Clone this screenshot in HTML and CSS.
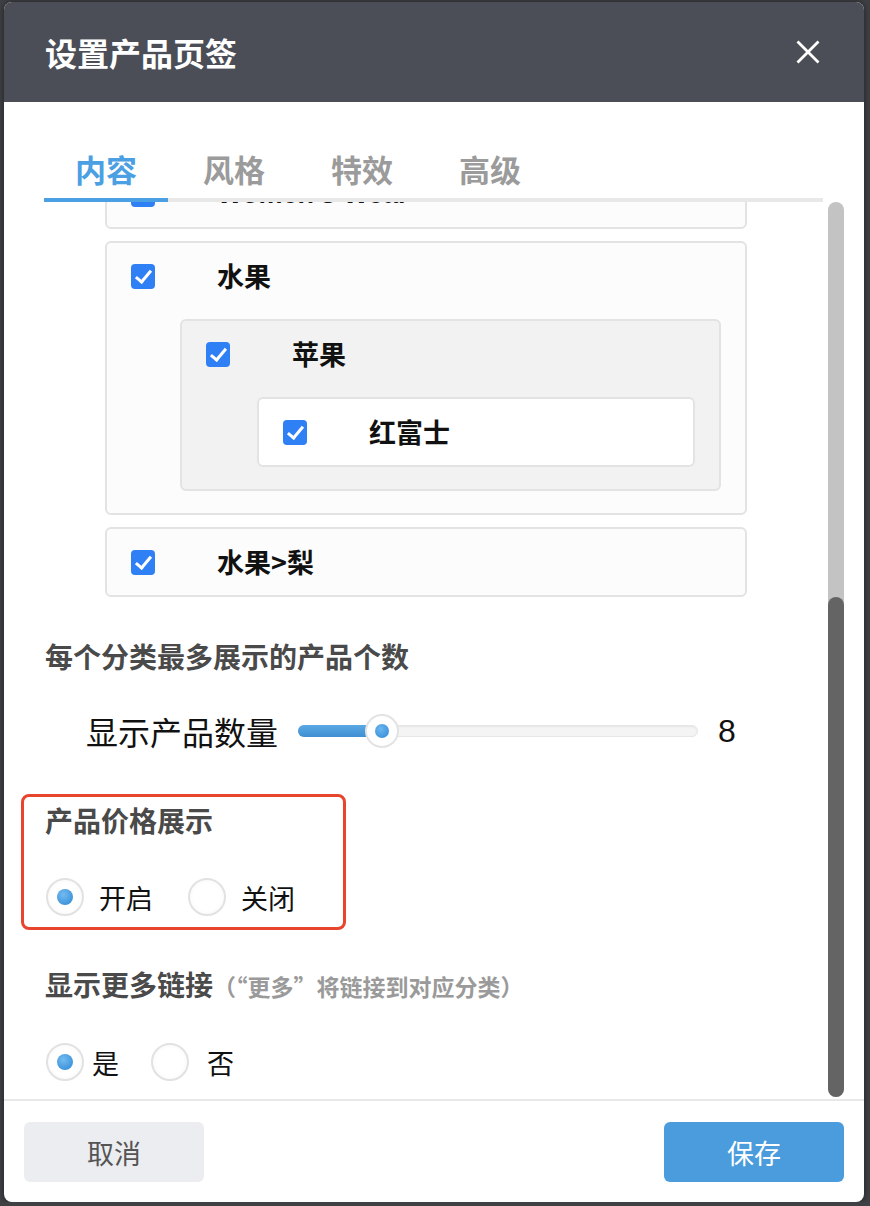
FILE: index.html
```html
<!DOCTYPE html>
<html lang="zh-CN">
<head>
    <meta charset="UTF-8">
    <meta name="viewport" content="width=device-width, initial-scale=1.0">
    <title>设置产品页签</title>
    <link rel="stylesheet" href="styles.css">
</head>
<body>
    <div class="modal">
        <div class="modal-header">
            <div class="modal-title">设置产品页签</div>
            <button class="close-btn">
                <svg width="24" height="24" viewBox="0 0 24 24"><path d="M1.5 1.5 L22.5 22.5 M22.5 1.5 L1.5 22.5" stroke="#fff" stroke-width="2.8" fill="none"/></svg>
            </button>
        </div>

        <div class="tabs">
            <div class="tab active">内容</div>
            <div class="tab">风格</div>
            <div class="tab">特效</div>
            <div class="tab">高级</div>
        </div>

        <div class="modal-body">
            <div class="scroll-view">
                <div class="scroll-content">
                    <div class="category-list">
                        <div class="cat">
                            <div class="cat-row"><span class="check"></span><span class="cat-name latin">Women's Wear</span></div>
                        </div>
                        <div class="cat">
                            <div class="cat-row"><span class="check"></span><span class="cat-name">水果</span></div>
                            <div class="cat sub">
                                <div class="cat-row"><span class="check"></span><span class="cat-name">苹果</span></div>
                                <div class="cat sub leaf">
                                    <div class="cat-row"><span class="check"></span><span class="cat-name">红富士</span></div>
                                </div>
                            </div>
                        </div>
                        <div class="cat">
                            <div class="cat-row"><span class="check"></span><span class="cat-name">水果&gt;梨</span></div>
                        </div>
                    </div>

                    <div class="field first">
                        <div class="field-title">每个分类最多展示的产品个数</div>
                        <div class="slider-row">
                            <span class="slider-label">显示产品数量</span>
                            <div class="slider">
                                <div class="slider-fill" style="width: 82px"></div>
                                <div class="slider-thumb" style="left: 66px"></div>
                            </div>
                            <span class="slider-value">8</span>
                        </div>
                    </div>

                    <div class="field highlight">
                        <div class="field-title">产品价格展示</div>
                        <div class="radio-group wide">
                            <label class="radio-item"><span class="radio checked"></span><span class="radio-text">开启</span></label>
                            <label class="radio-item"><span class="radio"></span><span class="radio-text">关闭</span></label>
                        </div>
                    </div>

                    <div class="field">
                        <div class="field-title">显示更多链接<span class="hint">（“更多”将链接到对应分类）</span></div>
                        <div class="radio-group narrow">
                            <label class="radio-item"><span class="radio checked"></span><span class="radio-text">是</span></label>
                            <label class="radio-item"><span class="radio"></span><span class="radio-text">否</span></label>
                        </div>
                    </div>
                </div>
            </div>
            <div class="scrollbar"><div class="scrollbar-thumb"></div></div>
        </div>

        <div class="modal-footer">
            <button class="btn btn-cancel">取消</button>
            <button class="btn btn-save">保存</button>
        </div>
    </div>
</body>
</html>
```

FILE: styles.css
```css
body {
    margin: 0;
    padding: 0;
    background: #3f4044;
    font-family: "Noto Sans CJK SC", "Liberation Sans", sans-serif;
    overflow: hidden;
}

.modal {
    width: 860px;
    height: 1200px;
    margin: 2px 0 0 4px;
    background: #fff;
    border-radius: 8px;
    overflow: hidden;
    display: flex;
    flex-direction: column;
    box-shadow: 0 0 6px rgba(0, 0, 0, 0.5);
}

/* header */
.modal-header {
    height: 100px;
    flex-shrink: 0;
    background: #4b4e56;
    display: flex;
    align-items: center;
    justify-content: space-between;
    padding: 0 44px 0 41px;
}
.modal-title {
    color: #fff;
    font-size: 32px;
    font-weight: bold;
    line-height: 40px;
}
.close-btn {
    background: none;
    border: none;
    padding: 0;
    width: 24px;
    height: 24px;
    cursor: pointer;
}
.close-btn svg { display: block; }

/* tabs */
.tabs {
    flex-shrink: 0;
    display: flex;
    align-items: flex-start;
    margin: 0 41px 0 40px;
    border-bottom: 4px solid #e8e8e8;
}
.tab {
    width: 124px;
    margin-right: 4px;
    padding: 47px 0 9px;
    font-size: 31px;
    line-height: 40px;
    font-weight: bold;
    text-align: center;
    color: #9b9b9b;
}
.tab.active {
    color: #4aa0e2;
    border-bottom: 4px solid #4aa0e2;
    margin-bottom: -4px;
}

/* body */
.modal-body {
    flex: 1;
    display: flex;
    min-height: 0;
}
.scroll-view {
    flex: 1;
    overflow: hidden;
    padding-left: 41px;
}
.scroll-content {
    margin-top: -43px;
}
.scrollbar {
    width: 16px;
    margin: 0 20px 2px 0;
    background: #c3c3c3;
    border-radius: 8px;
    display: flex;
    flex-direction: column;
}
.scrollbar-thumb {
    margin-top: auto;
    height: 500px;
    background: #646464;
    border-radius: 8px;
}

/* category tree */
.category-list {
    margin-left: 60px;
    width: 642px;
}
.cat {
    background: #fcfcfc;
    border: 2px solid #e3e3e3;
    border-radius: 6px;
    padding: 20px 24px;
    margin-bottom: 12px;
}
.cat.sub {
    background: #f2f2f2;
    margin: 30px 0 2px 49px;
}
.cat.sub.leaf {
    background: #fff;
    margin-left: 51px;
}
.cat-row {
    display: flex;
    align-items: center;
    height: 26px;
}
.check {
    position: relative;
    width: 24px;
    height: 25px;
    flex-shrink: 0;
    background: #2f7ff5;
    border-radius: 4px;
}
.check::after {
    content: "";
    position: absolute;
    left: 8px;
    top: 3px;
    width: 6px;
    height: 13px;
    border: solid #fff;
    border-width: 0 3px 3px 0;
    transform: rotate(40deg);
}
.cat-name {
    margin-left: 62px;
    font-size: 27px;
    line-height: 26px;
    font-weight: bold;
    color: #111;
}
.cat-name.latin {
    font-family: "Liberation Sans", sans-serif;
    line-height: 30px;
}

/* fields */
.field { margin-top: 43px; }
.field.first { margin-top: 48px; }
.field-title {
    margin-top: -3px;
    padding-bottom: 3px;
    font-size: 28px;
    line-height: 28px;
    font-weight: bold;
    color: #4a4a4a;
}
.hint {
    font-size: 23px;
    color: #9a9a9a;
}

.slider-row {
    display: flex;
    align-items: center;
    height: 40px;
    margin-top: 38px;
    padding-left: 41px;
}
.slider-label {
    font-size: 32px;
    color: #111;
}
.slider {
    position: relative;
    width: 398px;
    height: 10px;
    margin: 0 20px 0 20px;
    background: #f4f4f4;
    border: 1px solid #e6e6e6;
    border-radius: 6px;
    box-shadow: inset 0 1px 2px rgba(0, 0, 0, 0.06);
}
.slider-fill {
    height: 12px;
    margin: -1px 0 0 -1px;
    background: linear-gradient(#5aa8e4, #3f8fd2);
    border-radius: 6px;
}
.slider-thumb {
    position: absolute;
    top: -12px;
    width: 30px;
    height: 30px;
    background: #fff;
    border: 2px solid #e3e3e3;
    border-radius: 50%;
}
.slider-thumb::after {
    content: "";
    position: absolute;
    left: 8px;
    top: 8px;
    width: 14px;
    height: 14px;
    border-radius: 50%;
    background: radial-gradient(circle at 40% 35%, #6bb6ef, #2f88d6);
}
.slider-value {
    font-family: "Liberation Sans", sans-serif;
    font-size: 32px;
    color: #111;
}

.highlight {
    width: 325px;
    box-sizing: border-box;
    margin-left: -24px;
    padding: 12px 21px 11px;
    border: 3px solid #e8452f;
    border-radius: 8px;
}

.radio-group {
    display: flex;
    align-items: center;
    height: 38px;
    margin-top: 41px;
}
.field:last-child .radio-group { margin-top: 40px; }
.radio-item {
    display: flex;
    align-items: center;
}
.radio {
    position: relative;
    width: 34px;
    height: 34px;
    border: 2px solid #e2e2e2;
    border-radius: 50%;
    background: radial-gradient(circle, #fff 55%, #f3f3f3);
    margin-left: 1px;
}
.radio.checked::after {
    content: "";
    position: absolute;
    left: 9px;
    top: 9px;
    width: 16px;
    height: 16px;
    border-radius: 50%;
    background: radial-gradient(circle at 40% 35%, #72bbf0, #2c86d4);
}
.radio-text {
    font-size: 27px;
    color: #111;
}
.wide .radio-text { margin-left: 15px; }
.wide .radio-item + .radio-item { margin-left: 34px; }
.narrow .radio-text { margin-left: 8px; }
.narrow .radio-item + .radio-item { margin-left: 31px; }
.narrow .radio-item + .radio-item .radio-text { margin-left: 18px; }

/* footer */
.modal-footer {
    flex-shrink: 0;
    display: flex;
    justify-content: space-between;
    padding: 21px 20px 20px;
    border-top: 2px solid #e8e8e8;
}
.btn {
    width: 180px;
    height: 60px;
    border: none;
    border-radius: 6px;
    font-family: "Noto Sans CJK SC", sans-serif;
    font-size: 27px;
    cursor: pointer;
}
.btn-cancel {
    background: #ecedf1;
    color: #555;
}
.btn-save {
    background: #4a9cdd;
    color: #fff;
}
```
